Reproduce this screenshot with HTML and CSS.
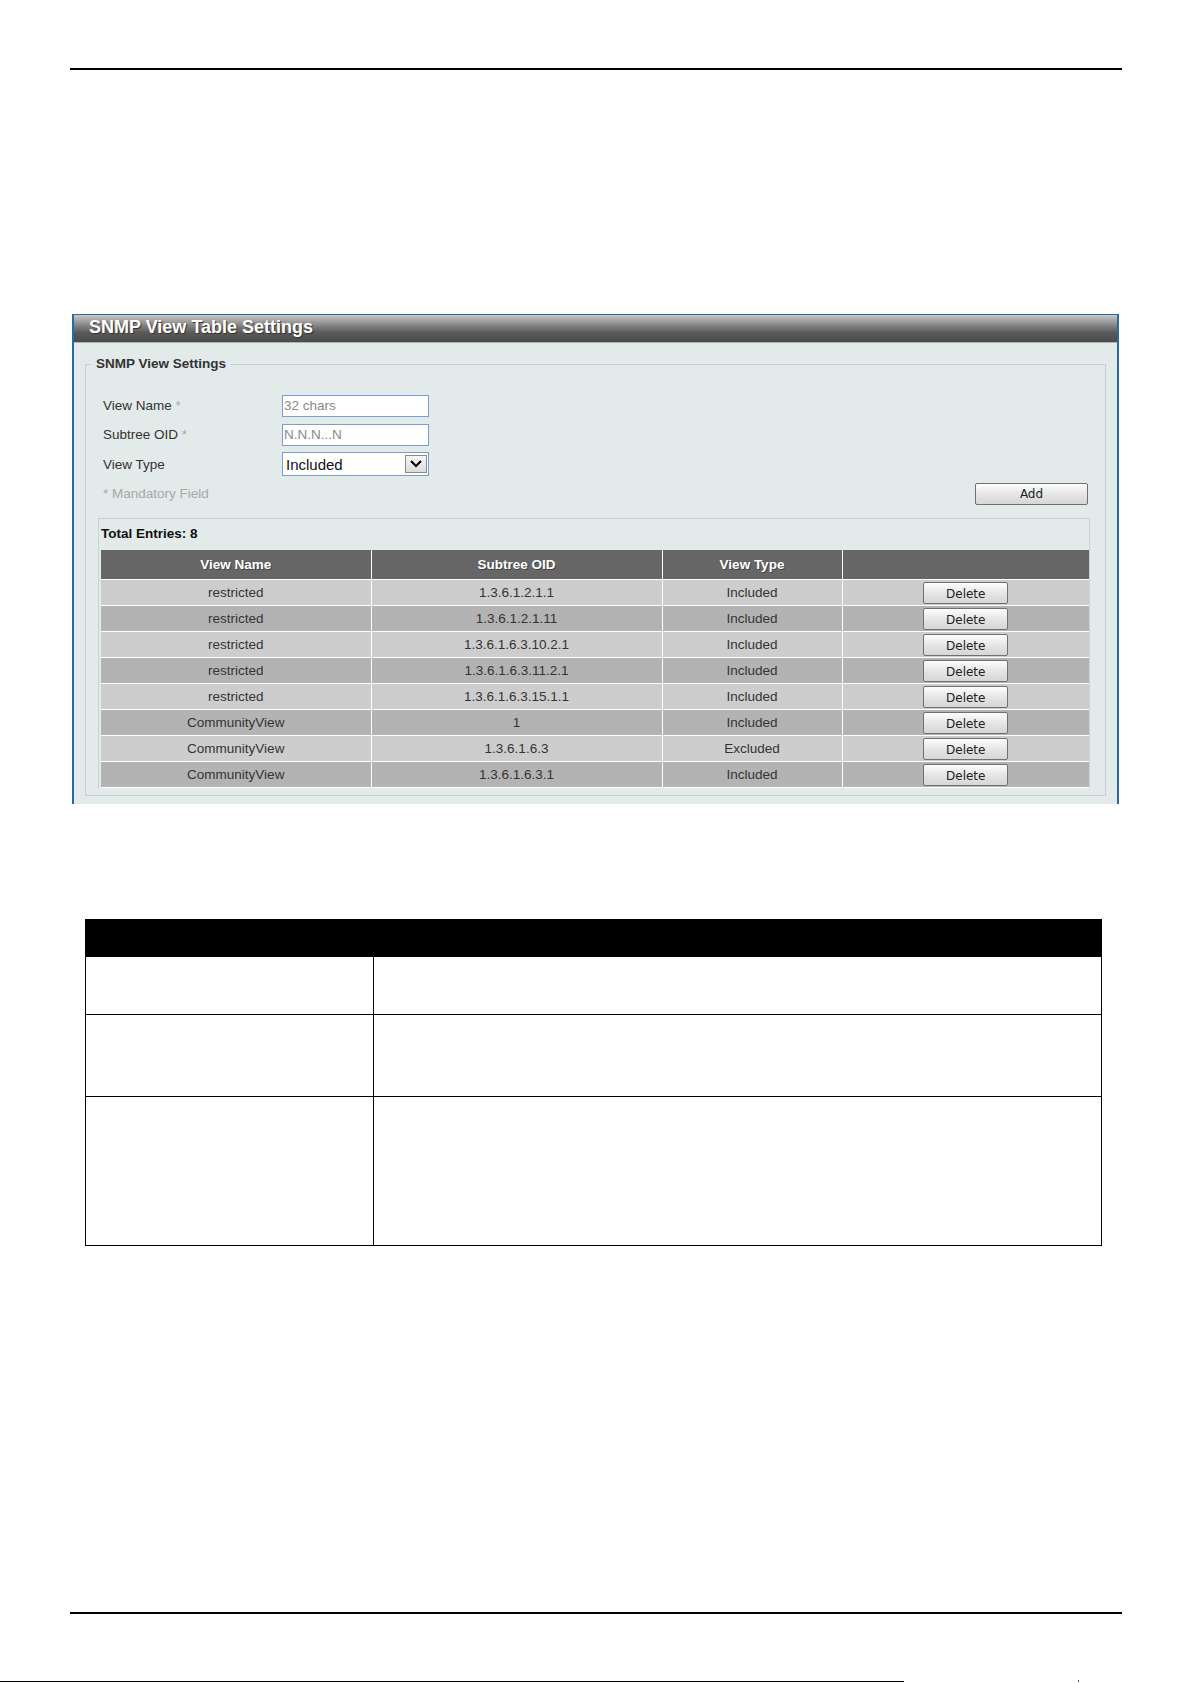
FILE: index.html
```html
<!DOCTYPE html>
<html lang="en">
<head>
  <meta charset="UTF-8" />
  <meta name="viewport" content="width=device-width, initial-scale=1.0"/>
  <title>SNMP View Table Settings</title>
  <link rel="stylesheet" href="styles.css">
</head>
<body>

  <div class="page">
    <div class="rule"></div>

    <section class="panel">
      <div class="panel-title">SNMP View Table Settings</div>

      <div class="panel-body">
        <fieldset class="group">
          <legend>SNMP View Settings</legend>

          <div class="form-row">
            <label for="viewName">View Name <span class="req">*</span></label>
            <input type="text" id="viewName" placeholder="32 chars" />
          </div>

          <div class="form-row">
            <label for="subtreeOid">Subtree OID <span class="req">*</span></label>
            <input type="text" id="subtreeOid" placeholder="N.N.N...N" />
          </div>

          <div class="form-row tall">
            <label for="viewType">View Type</label>
            <div class="select-box">
              <select id="viewType">
                <option>Included</option>
                <option>Excluded</option>
              </select>
              <span class="arrow">
                <svg width="12" height="8" viewBox="0 0 12 8"><polyline points="1,1 6,6 11,1" fill="none" stroke="#000" stroke-width="2"/></svg>
              </span>
            </div>
          </div>

          <div class="form-row">
            <span class="mandatory">* Mandatory Field</span>
            <button class="btn btn-add" type="button">Add</button>
          </div>

          <div class="entries">
            <div class="entries-count">Total Entries: 8</div>
            <table class="grid">
              <colgroup>
                <col class="c1"><col class="c2"><col class="c3"><col>
              </colgroup>
              <thead>
                <tr><th>View Name</th><th>Subtree OID</th><th>View Type</th><th></th></tr>
              </thead>
              <tbody>
                <tr><td>restricted</td><td>1.3.6.1.2.1.1</td><td>Included</td><td><button class="btn btn-del" type="button">Delete</button></td></tr>
                <tr><td>restricted</td><td>1.3.6.1.2.1.11</td><td>Included</td><td><button class="btn btn-del" type="button">Delete</button></td></tr>
                <tr><td>restricted</td><td>1.3.6.1.6.3.10.2.1</td><td>Included</td><td><button class="btn btn-del" type="button">Delete</button></td></tr>
                <tr><td>restricted</td><td>1.3.6.1.6.3.11.2.1</td><td>Included</td><td><button class="btn btn-del" type="button">Delete</button></td></tr>
                <tr><td>restricted</td><td>1.3.6.1.6.3.15.1.1</td><td>Included</td><td><button class="btn btn-del" type="button">Delete</button></td></tr>
                <tr><td>CommunityView</td><td>1</td><td>Included</td><td><button class="btn btn-del" type="button">Delete</button></td></tr>
                <tr><td>CommunityView</td><td>1.3.6.1.6.3</td><td>Excluded</td><td><button class="btn btn-del" type="button">Delete</button></td></tr>
                <tr><td>CommunityView</td><td>1.3.6.1.6.3.1</td><td>Included</td><td><button class="btn btn-del" type="button">Delete</button></td></tr>
              </tbody>
            </table>
          </div>
        </fieldset>
      </div>
    </section>

    <table class="desc">
      <thead>
        <tr><th class="d1"></th><th></th></tr>
      </thead>
      <tbody>
        <tr class="r1"><td></td><td></td></tr>
        <tr class="r2"><td></td><td></td></tr>
        <tr class="r3"><td></td><td></td></tr>
      </tbody>
    </table>

    <div class="rule rule-bottom"></div>
  </div>

  <div class="footer">
    <div class="footer-line"></div>
    <div class="footer-tick"></div>
  </div>

</body>
</html>
```

FILE: styles.css
```css
html, body {
  margin: 0;
  padding: 0;
  background: #fff;
}

body {
  font-family: "Liberation Sans", Arial, sans-serif;
  color: #333;
  height: 1684px;
  overflow: hidden;
}

.page {
  padding: 0 70px;
  width: 1052px;
}

.rule {
  margin-top: 68px;
  height: 2px;
  background: #000;
}

.rule-bottom {
  margin-top: 366px;
}

/* panel */

.panel {
  margin: 244px 3px 0 2px;
  border-top: 1px solid #2a6a9c;
  border-left: 2px solid #2a6a9c;
  border-right: 2px solid #2a6a9c;
  background: #e2eaea;
}

.panel-title {
  box-sizing: border-box;
  height: 28px;
  line-height: 25px;
  padding-left: 15px;
  background: linear-gradient(#c9c9c9 0%, #8a8a8a 35%, #5a5a5a 65%, #4b4b4b 100%);
  border-bottom: 1px solid #a9b4b4;
  color: #fff;
  font-size: 18px;
  font-weight: bold;
  text-shadow: 1px 1px 1px #333;
}

.panel-body {
  padding: 0 11px 8px 11px;
}

.group {
  margin: 13px 0 0;
  padding: 19px 15px 7px 12px;
  border: 1px solid #c6d0d0;
  min-width: 0;
}

.group legend {
  margin-left: -7px;
  padding: 0 5px;
  line-height: 16px;
  font-size: 13.5px;
  font-weight: bold;
  color: #333;
}

/* form */

.form-row {
  display: flex;
  align-items: center;
  height: 29px;
}

.form-row.tall {
  height: 30px;
}

.form-row label {
  width: 179px;
  padding-left: 5px;
  font-size: 13.5px;
  color: #333;
}

.req {
  color: #aaa;
}

.form-row input {
  width: 147px;
  height: 22px;
  box-sizing: border-box;
  margin: 0;
  padding: 0 1px;
  border: 1px solid #7b9fd0;
  font-family: "Liberation Sans", Arial, sans-serif;
  font-size: 13.5px;
  color: #333;
}

.form-row input::placeholder {
  color: #8a8a8a;
}

.select-box {
  display: flex;
  align-items: center;
  width: 147px;
  height: 24px;
  box-sizing: border-box;
  border: 1px solid #7b9fd0;
  background: #fff;
}

.select-box select {
  flex: 1;
  min-width: 0;
  height: 22px;
  margin: 0;
  padding: 0 0 0 3px;
  border: none;
  outline: none;
  background: #fff;
  appearance: none;
  -webkit-appearance: none;
  font-family: "Liberation Sans", Arial, sans-serif;
  font-size: 15px;
  color: #111;
}

.arrow {
  display: flex;
  align-items: center;
  justify-content: center;
  width: 22px;
  height: 18px;
  box-sizing: border-box;
  margin-right: 1px;
  border: 1px solid #8a8a8a;
  background: linear-gradient(#f6f6f6, #dcdcdc);
}

.mandatory {
  flex: 1;
  padding-left: 5px;
  font-size: 13.5px;
  color: #a9a9a9;
}

.btn {
  font-family: "DejaVu Sans", Verdana, sans-serif;
  font-size: 12px;
  color: #222;
  background: linear-gradient(#fdfdfd, #e6e6e6 50%, #d6d6d6);
  border: 1px solid #707070;
  border-radius: 2px;
  padding: 0;
  cursor: pointer;
}

.btn-add {
  width: 113px;
  height: 22px;
  margin-right: 2px;
}

.btn-del {
  width: 85px;
  height: 22px;
  padding-top: 3px;
  vertical-align: middle;
}

/* entries table */

.entries {
  margin-top: 10px;
  padding-left: 2px;
  border: 1px solid #c9d3d3;
  border-bottom: none;
}

.entries-count {
  height: 31px;
  line-height: 29px;
  font-size: 13.5px;
  font-weight: bold;
  color: #111;
}

.grid {
  width: 100%;
  border-collapse: collapse;
  table-layout: fixed;
  font-size: 13.5px;
}

.grid .c1 { width: 270px; }
.grid .c2 { width: 291px; }
.grid .c3 { width: 180px; }

.grid th {
  height: 29px;
  padding: 0;
  background: #666;
  color: #fff;
  font-weight: bold;
  text-shadow: 1px 1px 0 #444;
  border: 1px solid #fff;
  border-top: none;
}

.grid td {
  height: 25px;
  padding: 0;
  text-align: center;
  color: #333;
  border: 1px solid #fff;
}

.grid tbody tr:nth-child(odd) td {
  background: #cdcdcd;
}

.grid tbody tr:nth-child(even) td {
  background: #b3b3b3;
}

.grid tr td:first-child,
.grid tr th:first-child {
  border-left: none;
}

.grid tr td:last-child,
.grid tr th:last-child {
  border-right: none;
}

/* description table */

.desc {
  margin: 115px 0 0 15px;
  width: 1017px;
  border-collapse: collapse;
}

.desc th {
  height: 36px;
  padding: 0;
  background: #000;
  border: 1px solid #000;
}

.desc th.d1 {
  width: 287px;
}

.desc td {
  padding: 0;
  border: 1px solid #000;
}

.desc .r1 td { height: 57px; }
.desc .r2 td { height: 81px; }
.desc .r3 td { height: 148px; }

/* footer */

.footer {
  display: flex;
  align-items: flex-end;
  margin-top: 66px;
  height: 2px;
}

.footer-line {
  width: 904px;
  height: 1px;
  background: #000;
}

.footer-tick {
  margin-left: 174px;
  width: 1px;
  height: 2px;
  background: #555;
}
```
